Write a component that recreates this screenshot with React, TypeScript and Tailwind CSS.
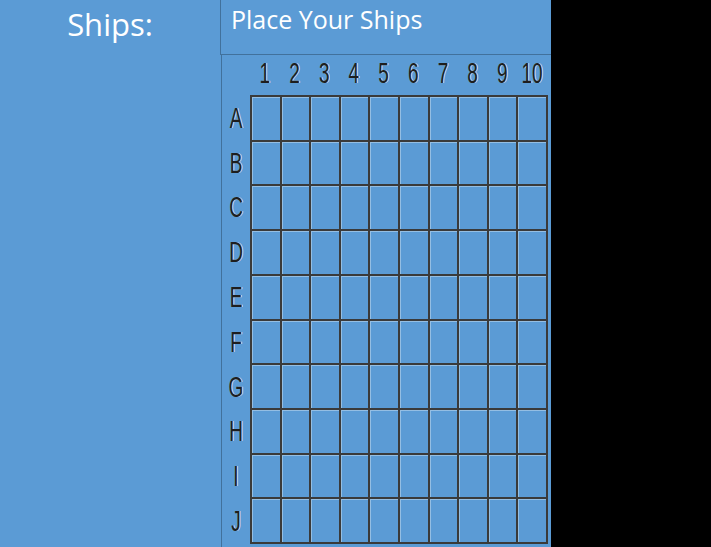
import React from 'react';

const cols = ['1', '2', '3', '4', '5', '6', '7', '8', '9', '10'];
const rows = ['A', 'B', 'C', 'D', 'E', 'F', 'G', 'H', 'I', 'J'];

const labelClass =
  "font-['Liberation_Sans',Arial,sans-serif] text-[19px] leading-none text-[#1e1e1e] [text-shadow:1px_0_0_rgba(255,255,255,0.7)] scale-y-[1.55] inline-block";

export default function App() {
  return (
    <div className="flex h-[547px] w-[711px] overflow-hidden bg-black">
      <div className="flex w-[551px] bg-[#5b9bd5]">
        {/* Left panel */}
        <div className="w-[220px] shrink-0">
          <h1 className="pt-[2px] text-center font-['Open_Sans',sans-serif] text-[31px] leading-[44px] text-white">
            Ships:
          </h1>
        </div>

        {/* Right panel */}
        <div className="flex flex-1 flex-col">
          <div className="h-[55px] border-b border-l border-[#41719c] pl-[10px]">
            <h2 className="pt-[2px] font-['Open_Sans',sans-serif] text-[25px] leading-[34px] text-white">
              Place Your Ships
            </h2>
          </div>

          <div className="ml-[1px] flex-1 border-l border-[#41719c]">
            {/* Column numbers */}
            <div className="flex h-[40px] pl-[28px]">
              {cols.map((c) => (
                <div key={c} className="flex w-[29.7px] items-center justify-center pb-[6px]">
                  <span className={labelClass}>{c}</span>
                </div>
              ))}
            </div>

            <div className="flex">
              {/* Row letters */}
              <div className="flex w-[28px] flex-col">
                {rows.map((r) => (
                  <div key={r} className="flex h-[44.8px] items-center justify-center">
                    <span className={labelClass}>{r}</span>
                  </div>
                ))}
              </div>

              {/* Board */}
              <div className="grid h-[449px] w-[298px] grid-cols-10 grid-rows-10 border-l-2 border-t-2 border-[#3a3a3a]">
                {rows.map((r) =>
                  cols.map((c) => (
                    <div
                      key={r + c}
                      className="border-b-2 border-r-2 border-[#3a3a3a] shadow-[inset_1px_1px_0_rgba(255,255,255,0.35)]"
                    />
                  ))
                )}
              </div>
            </div>
          </div>
        </div>
      </div>
    </div>
  );
}
